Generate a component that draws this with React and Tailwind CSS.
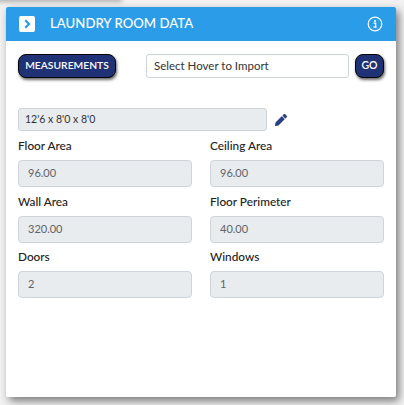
import React from "react";

function Field({ label, value }) {
  return (
    <div className="flex flex-col">
      <label className="text-[11.8px] leading-[16px] font-medium text-[#222] h-[16px]">{label}</label>
      <div className="mt-[6px] h-[27px] bg-[#e9ecef] border border-[#ced4da] rounded-[4px] pl-[9px] flex items-center text-[11px] text-[#5c636a]">{value}</div>
    </div>
  );
}

export default function App() {
  return (
    <div className="relative w-[404px] h-[405px] bg-[#f2f2f2] pt-[7px] pl-[6px] font-['Lato','Noto_Sans',sans-serif] overflow-hidden">
      <div className="absolute top-[-3px] left-[-6px] w-[128px] h-[3px] bg-[#aaa] shadow-[0_1px_5px_rgba(0,0,0,0.45)]" />
      <div className="w-[390px] h-[390px] bg-white rounded-[2px] shadow-[3px_4px_8px_rgba(0,0,0,0.5)] overflow-hidden">
        <div className="h-[34px] bg-[#2a9ce8] flex items-center pl-[13px] pr-[13px]">
          <div className="w-[16px] h-[16px] bg-white rounded-[2px] flex items-center justify-center">
            <svg width="10" height="10" viewBox="0 0 10 10" fill="none" stroke="#2a9ce8" strokeWidth="2.2"><path d="M3.2 1.2 7 5 3.2 8.8" /></svg>
          </div>
          <div className="ml-[15px] text-white text-[13.2px] font-medium">LAUNDRY ROOM DATA</div>
          <svg className="ml-auto" width="16" height="16" viewBox="0 0 16 16" fill="none">
            <circle cx="8" cy="8" r="6.8" stroke="white" strokeWidth="1.2" />
            <circle cx="8" cy="4.9" r="1" fill="white" />
            <path d="M6.5 7.1H8.6V11M6.5 11.2H9.7" stroke="white" strokeWidth="1.3" />
          </svg>
        </div>
        <div className="px-[12px]">
          <div className="flex items-center mt-[13px]">
            <button className="h-[24px] w-[98px] bg-[#1f3275] border border-black rounded-[8px] text-white text-[10.3px] font-semibold shadow-[1px_2px_3px_rgba(0,0,0,0.6)]">MEASUREMENTS</button>
            <div className="ml-[30px] w-[203px] h-[24px] bg-white border border-[#ced4da] rounded-[3px] flex items-center pl-[7px] text-[11.5px] text-[#333]">Select Hover to Import</div>
            <button className="ml-[6px] w-[29px] h-[24px] bg-[#1f3275] border border-black rounded-[8px] text-white text-[10.5px] font-semibold shadow-[1px_2px_3px_rgba(0,0,0,0.6)]">GO</button>
          </div>
          <div className="flex items-center mt-[30px]">
            <div className="w-[249px] h-[23px] bg-[#e9ecef] border border-[#ced4da] rounded-[3px] flex items-center pl-[6px] text-[10.5px] text-[#333]">12'6 x 8'0 x 8'0</div>
            <svg className="ml-[8px]" width="12" height="12" viewBox="0 0 512 512" fill="#2a3f86">
              <path d="M497.9 142.1l-46.1 46.1c-4.7 4.7-12.3 4.7-17 0l-111-111c-4.7-4.7-4.7-12.3 0-17l46.1-46.1c18.7-18.7 49.1-18.7 67.9 0l60.1 60.1c18.8 18.7 18.8 49.1 0 67.9zM284.2 99.8L21.6 362.4.4 483.9c-2.9 16.4 11.4 30.6 27.8 27.8l121.5-21.3 262.6-262.6c4.7-4.7 4.7-12.3 0-17l-111-111c-4.8-4.7-12.4-4.7-17.1 0z" />
            </svg>
          </div>
          <div className="grid grid-cols-[174px_174px] gap-x-[18px] gap-y-[6.5px] mt-[7px]">
            <Field label="Floor Area" value="96.00" />
            <Field label="Ceiling Area" value="96.00" />
            <Field label="Wall Area" value="320.00" />
            <Field label="Floor Perimeter" value="40.00" />
            <Field label="Doors" value="2" />
            <Field label="Windows" value="1" />
          </div>
        </div>
      </div>
    </div>
  );
}
